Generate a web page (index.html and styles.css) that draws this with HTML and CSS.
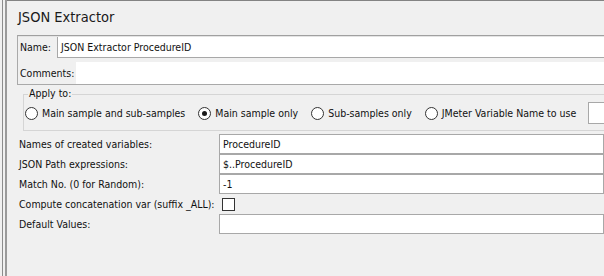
FILE: index.html
```html
<!DOCTYPE html>
<html lang="en">

<head>
    <meta charset="UTF-8"/>
    <title>JSON Extractor</title>
    <link rel="stylesheet" href="styles.css">
</head>

<body>
<div class="window">
    <div class="splitter"></div>
    <div class="panel">
        <h1 class="title">JSON Extractor</h1>

        <div class="name-box">
            <div class="name-row">
                <label>Name:</label>
                <div class="field">JSON Extractor ProcedureID</div>
            </div>
            <div class="comment-row">
                <label>Comments:</label>
                <div class="area"></div>
            </div>
        </div>

        <div class="apply">
            <span class="legend">Apply to:</span>
            <div class="radios">
                <span class="radio"><i class="dot"></i>Main sample and sub-samples</span>
                <span class="radio checked"><i class="dot"></i>Main sample only</span>
                <span class="radio"><i class="dot"></i>Sub-samples only</span>
                <span class="radio"><i class="dot"></i>JMeter Variable Name to use</span>
                <div class="field var-field"></div>
            </div>
        </div>

        <div class="form">
            <label>Names of created variables:</label>
            <div class="field">ProcedureID</div>
            <label>JSON Path expressions:</label>
            <div class="field">$..ProcedureID</div>
            <label>Match No. (0 for Random):</label>
            <div class="field">-1</div>
            <label>Compute concatenation var (suffix _ALL):</label>
            <div class="check-cell"><span class="checkbox"></span></div>
            <label>Default Values:</label>
            <div class="field"></div>
        </div>
    </div>
</div>
</body>
</html>
```

FILE: styles.css
```css
* {
    box-sizing: border-box;
}

html, body {
    margin: 0;
    height: 100%;
    overflow: hidden;
}

body {
    background: #f0f0f0;
    font-family: "DejaVu Sans Condensed", "DejaVu Sans", sans-serif;
    font-size: 10.5px;
    color: #111;
    white-space: nowrap;
}

.window {
    display: flex;
    height: 100%;
}

/* double line of the split pane on the left */
.splitter {
    width: 5px;
    flex-shrink: 0;
    margin-left: 2px;
    border-left: 1px solid #8c8c8c;
    border-right: 2px solid #9a9a9a;
}

.panel {
    flex: 1;
    min-width: 0;
    overflow: hidden;
    border-top: 1px solid #838383;
    padding: 0 0 0 10px;
}

.title {
    margin: 0;
    padding: 8px 0 0 1px;
    height: 34px;
    font-size: 14.5px;
    font-weight: normal;
    color: #1a1a1a;
}

/* name + comments box */
.name-box {
    border: 1px solid #a9a9a9;
    border-top-color: #a0a0a0;
    border-right: none;
}

.name-row {
    display: flex;
    align-items: center;
    height: 21px;
    border-top: 1px solid #e4e4e4;
}

.name-row label {
    width: 39px;
    padding-left: 2px;
    flex-shrink: 0;
}

.name-row .field {
    flex: 1;
    height: 21px;
    border-top: none;
    border-right: none;
}

.comment-row {
    display: flex;
    align-items: center;
    padding-top: 5px;
    height: 27px;
}

.comment-row label {
    width: 58px;
    padding-left: 2px;
    flex-shrink: 0;
}

.area {
    flex: 1;
    height: 22px;
    background: #fff;
}

/* Apply to group */
.apply {
    position: relative;
    margin: 9px 0 0 6px;
    height: 37px;
    border: 1px solid #d5d5d5;
    border-right: none;
}

.apply .legend {
    position: absolute;
    left: 4px;
    top: -8px;
    padding: 0 1px;
    background: #f0f0f0;
}

.radios {
    display: flex;
    align-items: center;
    height: 100%;
    padding: 1px 0 0 1px;
}

.radio {
    display: flex;
    align-items: center;
    flex-shrink: 0;
    margin-right: 13px;
}

.radio .dot {
    width: 13px;
    height: 13px;
    margin-right: 4px;
    border: 1px solid #333;
    border-radius: 50%;
    background: #fff;
    position: relative;
}

.radio.checked .dot::after {
    content: "";
    position: absolute;
    left: 3px;
    top: 3px;
    width: 5px;
    height: 5px;
    border-radius: 50%;
    background: #1a1a1a;
}

.radios .var-field {
    flex: 1;
    min-width: 10px;
    height: 22px;
    margin-left: -1px;
    border-right: none;
}

/* fields grid */
.form {
    display: grid;
    grid-template-columns: 200px 1fr;
    grid-auto-rows: 20px;
    margin-top: 3px;
    padding-left: 2px;
}

.form label {
    display: flex;
    align-items: center;
}

.field {
    background: #fff;
    border: 1px solid #a8a8a8;
    padding: 0 3px;
    display: flex;
    align-items: center;
    overflow: hidden;
}

.check-cell {
    display: flex;
    align-items: center;
    padding-left: 3px;
    height: 21px;
}

.checkbox {
    width: 13px;
    height: 13px;
    border: 1px solid #333;
    background: #fff;
}
```
